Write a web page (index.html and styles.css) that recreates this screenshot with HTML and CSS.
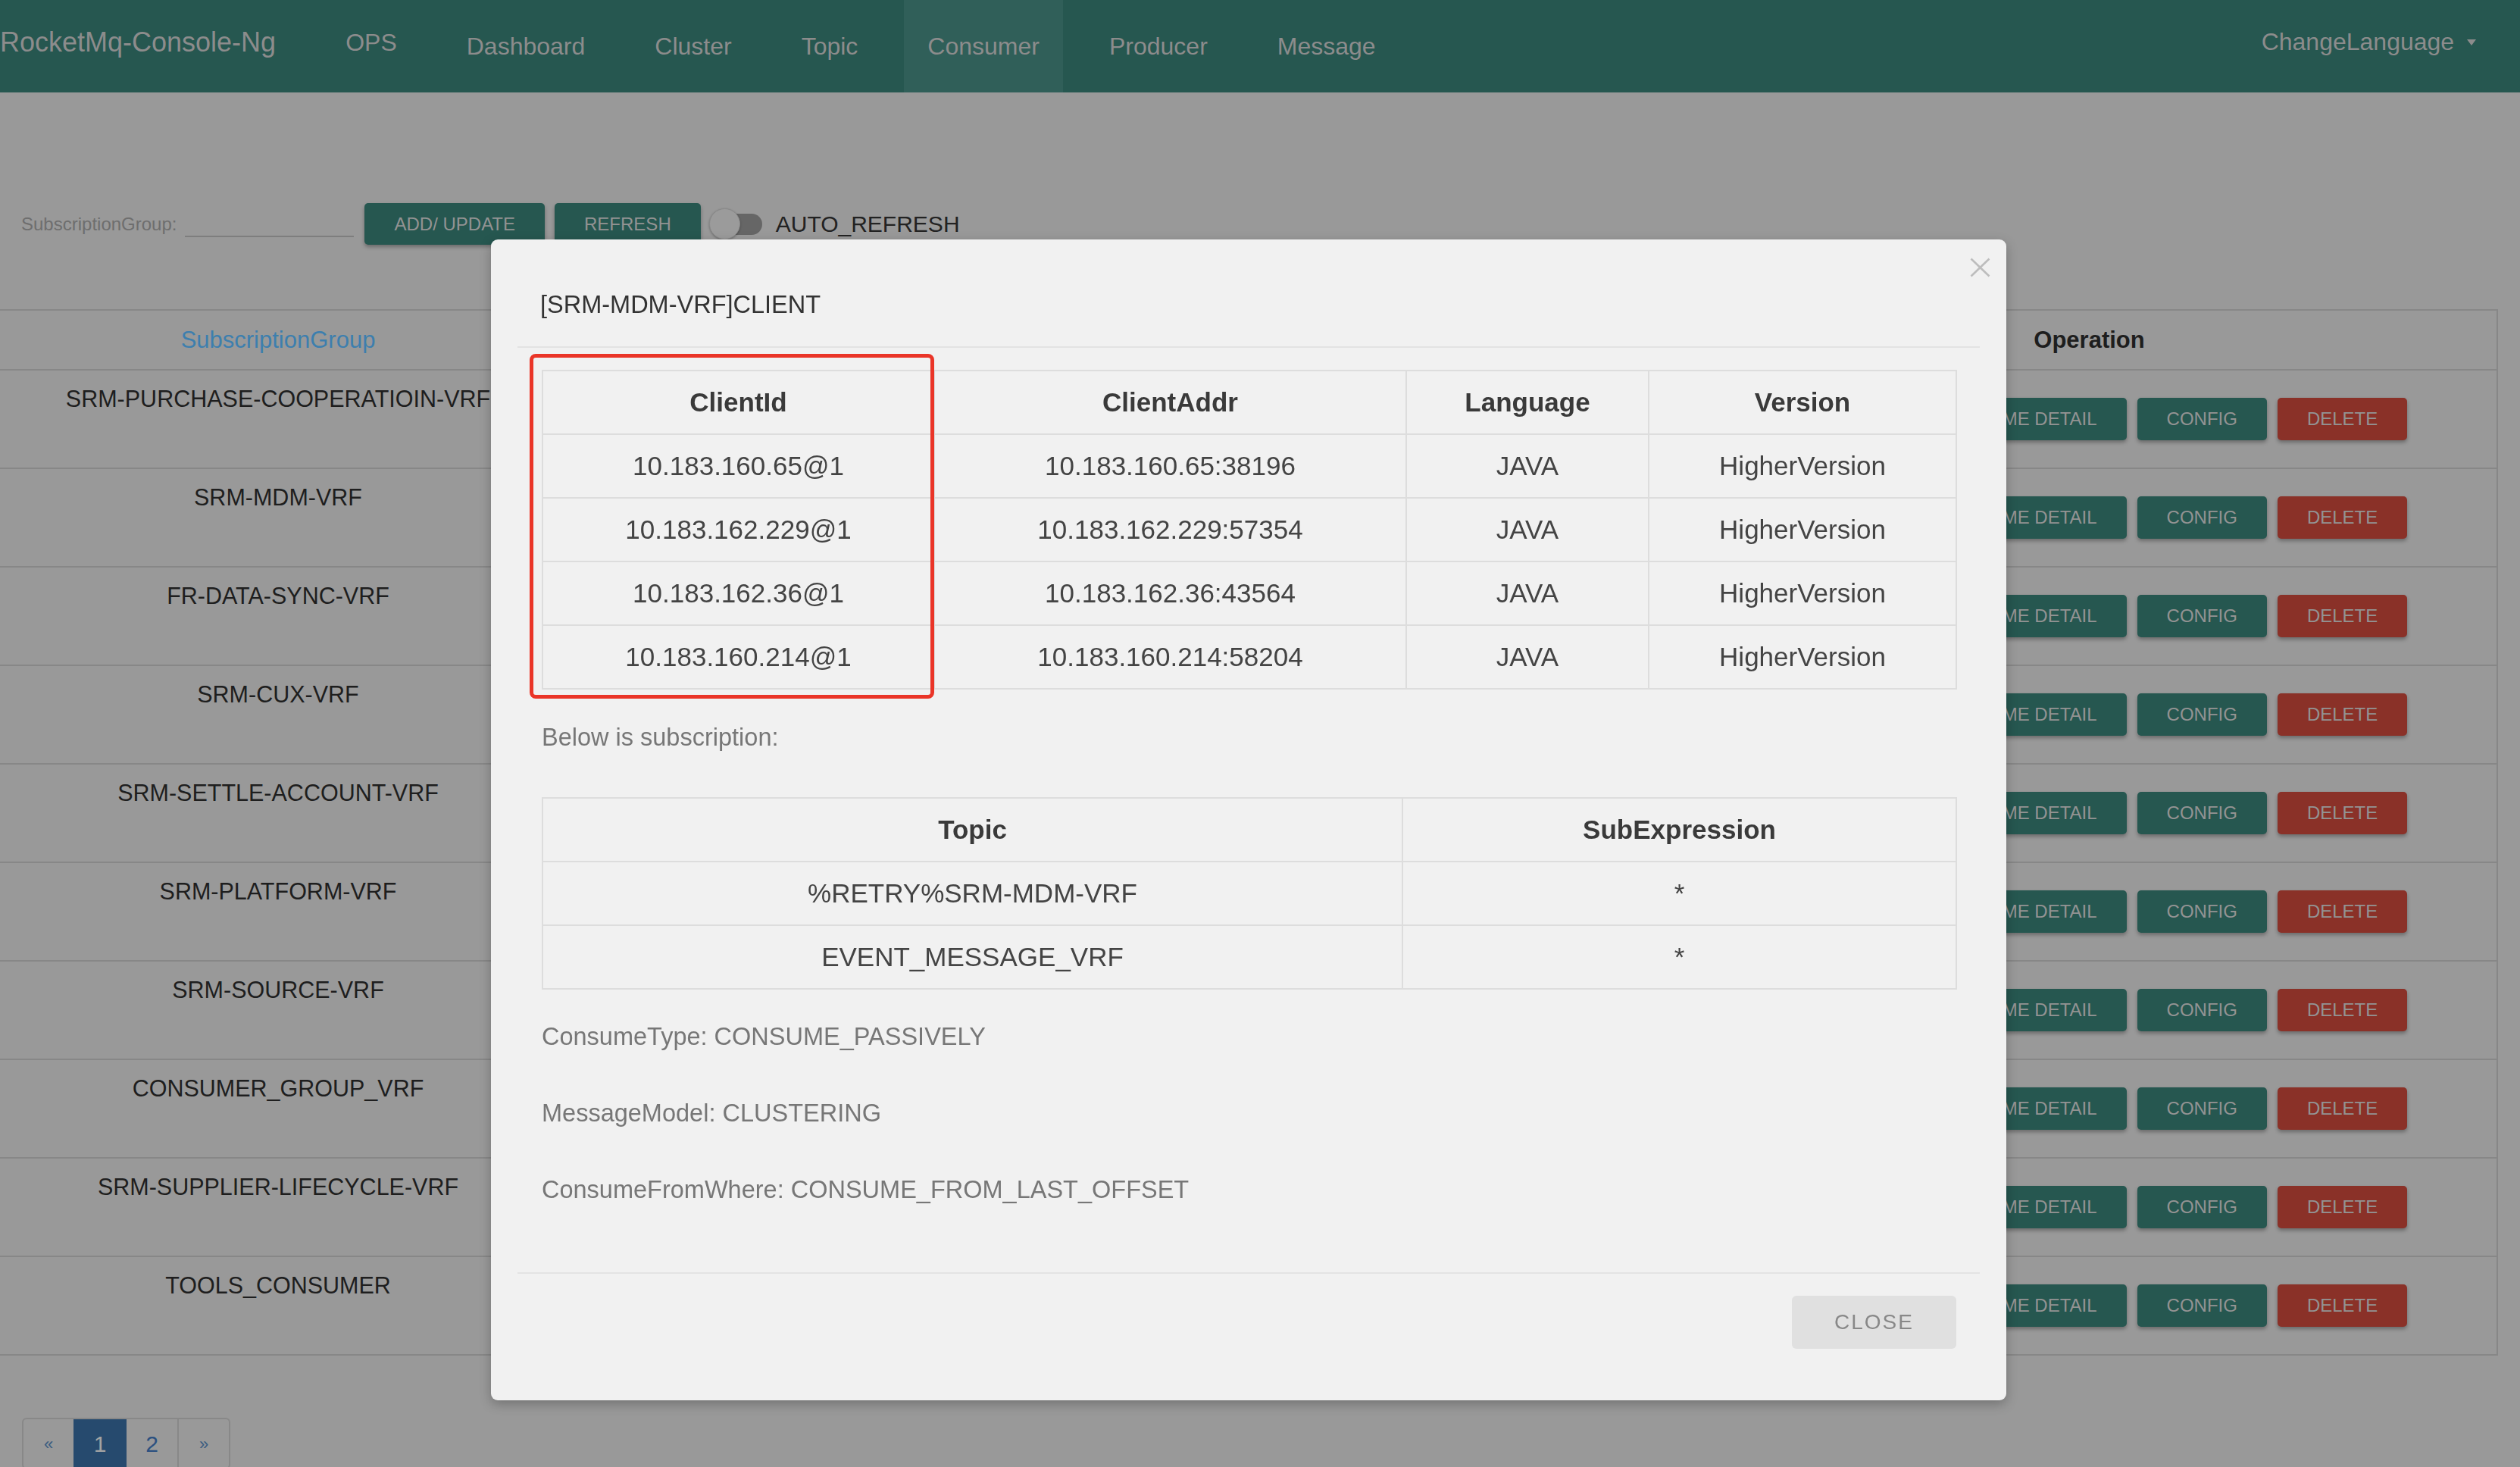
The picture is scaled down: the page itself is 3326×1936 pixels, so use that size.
FILE: index.html
```html
<!DOCTYPE html>
<html>
<head>
<meta charset="utf-8">
<title>RocketMq-Console-Ng</title>
<link rel="stylesheet" href="styles.css">
</head>
<body>
<nav class="navbar">
  <a class="brand">RocketMq-Console-Ng</a>
  <ul class="nav">
    <li class="ops">OPS</li>
    <li>Dashboard</li>
    <li>Cluster</li>
    <li>Topic</li>
    <li class="active">Consumer</li>
    <li>Producer</li>
    <li>Message</li>
  </ul>
  <div class="lang">ChangeLanguage <span class="caret"></span></div>
</nav>

<main class="content">
  <div class="toolbar">
    <label class="tb-label">SubscriptionGroup:</label>
    <span class="tb-input"></span>
    <button class="btn btn-green tb-add">ADD/ UPDATE</button>
    <button class="btn btn-green tb-refresh">REFRESH</button>
    <span class="switch"><span class="track"></span><span class="knob"></span></span>
    <span class="auto">AUTO_REFRESH</span>
  </div>

  <table class="groups">
    <colgroup>
      <col class="c-name"><col class="c-mid"><col class="c-op">
    </colgroup>
    <thead>
      <tr><th class="th-link">SubscriptionGroup</th><th></th><th class="th-op">Operation</th></tr>
    </thead>
    <tbody>
      <tr><td class="name">SRM-PURCHASE-COOPERATIOIN-VRF</td><td></td><td class="ops-cell"><div class="btns"><button class="btn btn-green">CONSUME DETAIL</button><button class="btn btn-green">CONFIG</button><button class="btn btn-red">DELETE</button></div></td></tr>
      <tr><td class="name">SRM-MDM-VRF</td><td></td><td class="ops-cell"><div class="btns"><button class="btn btn-green">CONSUME DETAIL</button><button class="btn btn-green">CONFIG</button><button class="btn btn-red">DELETE</button></div></td></tr>
      <tr><td class="name">FR-DATA-SYNC-VRF</td><td></td><td class="ops-cell"><div class="btns"><button class="btn btn-green">CONSUME DETAIL</button><button class="btn btn-green">CONFIG</button><button class="btn btn-red">DELETE</button></div></td></tr>
      <tr><td class="name">SRM-CUX-VRF</td><td></td><td class="ops-cell"><div class="btns"><button class="btn btn-green">CONSUME DETAIL</button><button class="btn btn-green">CONFIG</button><button class="btn btn-red">DELETE</button></div></td></tr>
      <tr><td class="name">SRM-SETTLE-ACCOUNT-VRF</td><td></td><td class="ops-cell"><div class="btns"><button class="btn btn-green">CONSUME DETAIL</button><button class="btn btn-green">CONFIG</button><button class="btn btn-red">DELETE</button></div></td></tr>
      <tr><td class="name">SRM-PLATFORM-VRF</td><td></td><td class="ops-cell"><div class="btns"><button class="btn btn-green">CONSUME DETAIL</button><button class="btn btn-green">CONFIG</button><button class="btn btn-red">DELETE</button></div></td></tr>
      <tr><td class="name">SRM-SOURCE-VRF</td><td></td><td class="ops-cell"><div class="btns"><button class="btn btn-green">CONSUME DETAIL</button><button class="btn btn-green">CONFIG</button><button class="btn btn-red">DELETE</button></div></td></tr>
      <tr><td class="name">CONSUMER_GROUP_VRF</td><td></td><td class="ops-cell"><div class="btns"><button class="btn btn-green">CONSUME DETAIL</button><button class="btn btn-green">CONFIG</button><button class="btn btn-red">DELETE</button></div></td></tr>
      <tr><td class="name">SRM-SUPPLIER-LIFECYCLE-VRF</td><td></td><td class="ops-cell"><div class="btns"><button class="btn btn-green">CONSUME DETAIL</button><button class="btn btn-green">CONFIG</button><button class="btn btn-red">DELETE</button></div></td></tr>
      <tr><td class="name">TOOLS_CONSUMER</td><td></td><td class="ops-cell"><div class="btns"><button class="btn btn-green">CONSUME DETAIL</button><button class="btn btn-green">CONFIG</button><button class="btn btn-red">DELETE</button></div></td></tr>
    </tbody>
  </table>

  <ul class="pagination">
    <li class="pg-arrow">«</li>
    <li class="pg-active">1</li>
    <li class="pg-num">2</li>
    <li class="pg-arrow pg-last">»</li>
  </ul>
</main>

<div class="modal">
  <div class="modal-header">
    <h4 class="modal-title">[SRM-MDM-VRF]CLIENT</h4>
    <span class="close" aria-label="close"><svg width="27" height="26" viewBox="0 0 27 26"><path d="M1.5 1.5 L25.5 24.5 M25.5 1.5 L1.5 24.5" stroke="#bdbdbd" stroke-width="2.6" fill="none"/></svg></span>
  </div>
  <div class="modal-body">
    <table class="mtable clients">
      <colgroup><col class="w1"><col class="w2"><col class="w3"><col class="w4"></colgroup>
      <thead><tr><th>ClientId</th><th>ClientAddr</th><th>Language</th><th>Version</th></tr></thead>
      <tbody>
        <tr><td>10.183.160.65@1</td><td>10.183.160.65:38196</td><td>JAVA</td><td>HigherVersion</td></tr>
        <tr><td>10.183.162.229@1</td><td>10.183.162.229:57354</td><td>JAVA</td><td>HigherVersion</td></tr>
        <tr><td>10.183.162.36@1</td><td>10.183.162.36:43564</td><td>JAVA</td><td>HigherVersion</td></tr>
        <tr><td>10.183.160.214@1</td><td>10.183.160.214:58204</td><td>JAVA</td><td>HigherVersion</td></tr>
      </tbody>
    </table>
    <p class="below">Below is subscription:</p>
    <table class="mtable subs">
      <colgroup><col class="s1"><col class="s2"></colgroup>
      <thead><tr><th>Topic</th><th>SubExpression</th></tr></thead>
      <tbody>
        <tr><td>%RETRY%SRM-MDM-VRF</td><td>*</td></tr>
        <tr><td>EVENT_MESSAGE_VRF</td><td>*</td></tr>
      </tbody>
    </table>
    <p class="info first">ConsumeType: CONSUME_PASSIVELY</p>
    <p class="info">MessageModel: CLUSTERING</p>
    <p class="info">ConsumeFromWhere: CONSUME_FROM_LAST_OFFSET</p>
  </div>
  <div class="modal-footer">
    <button class="btn-close">CLOSE</button>
  </div>
  <div class="highlight"></div>
</div>
</body>
</html>
```

FILE: styles.css
```css
html, body {
  margin: 0;
  padding: 0;
  overflow: hidden;
  height: 100%;
}
body {
  background: #999999;
  font-family: "Helvetica Neue", "Liberation Sans", Arial, sans-serif;
  color: #1f1f1f;
}

/* ---------- navbar ---------- */
.navbar {
  height: 122px;
  background: #265750;
  display: flex;
  align-items: stretch;
  color: #8c8c8c;
}
.brand {
  font-size: 36px;
  line-height: 111px;
  padding: 0 31px 0 0;
  margin-right: 30px;
  white-space: nowrap;
}
.nav {
  list-style: none;
  margin: 0;
  padding: 0;
  display: flex;
  gap: 30px;
}
.nav li {
  font-size: 32px;
  line-height: 122px;
  padding: 0 31px;
  white-space: nowrap;
}
.nav li.ops { line-height: 112px; }
.nav li.active { background: #305f59; }
.lang {
  margin-left: auto;
  font-size: 32px;
  line-height: 110px;
  padding-right: 58px;
  white-space: nowrap;
}
.caret {
  display: inline-block;
  width: 0;
  height: 0;
  border-left: 6px solid transparent;
  border-right: 6px solid transparent;
  border-top: 8px solid #8c8c8c;
  vertical-align: middle;
  margin-left: 8px;
  position: relative;
  top: -2px;
}

/* ---------- toolbar ---------- */
.content { padding: 0; }
.toolbar {
  margin-top: 146px;
  padding-left: 28px;
  height: 55px;
  display: flex;
  align-items: center;
}
.tb-label {
  font-size: 24px;
  color: #6e6e6e;
}
.tb-input {
  display: block;
  width: 223px;
  height: 32px;
  border-bottom: 2px solid #7e7e7e;
  margin-left: 11px;
}
.btn {
  font-family: "Helvetica Neue", "Liberation Sans", Arial, sans-serif;
  font-size: 24px;
  color: #939393;
  border: none;
  border-radius: 5px;
  padding: 0 39px;
  box-shadow: 0 3px 5px rgba(0, 0, 0, 0.3);
  white-space: nowrap;
}
.btn-green { background: #265750; }
.btn-red { background: #8a3128; }
.toolbar .btn { height: 55px; }
.tb-add { margin-left: 14px; }
.tb-refresh { margin-left: 13px; }
.switch {
  position: relative;
  width: 70px;
  height: 41px;
  margin-left: 11px;
}
.track {
  position: absolute;
  left: 10px;
  top: 7px;
  width: 60px;
  height: 28px;
  border-radius: 14px;
  background: #666666;
}
.knob {
  position: absolute;
  left: 0;
  top: 0;
  width: 39px;
  height: 39px;
  border-radius: 50%;
  background: #9b9b9b;
  border: 1px solid #8a8a8a;
  box-shadow: 0 1px 3px rgba(0, 0, 0, 0.3);
}
.auto {
  font-size: 30px;
  color: #222;
  margin-left: 18px;
}

/* ---------- main table ---------- */
.groups {
  margin-top: 85px;
  width: 3296px;
  border-collapse: collapse;
  table-layout: fixed;
}
.c-name { width: 734px; }
.c-mid { width: 1486px; }
.c-op { width: 1076px; }
.groups th {
  height: 77px;
  padding: 0;
  font-size: 31px;
  font-weight: normal;
  border-top: 2px solid #878787;
  border-bottom: 2px solid #878787;
  vertical-align: middle;
  text-align: center;
}
.groups th.th-link { color: #3d7fae; }
.groups th.th-op { font-weight: bold; color: #1e1e1e; border-right: 2px solid #878787; }
.groups td {
  height: 113px;
  padding: 0;
  border-bottom: 2px solid #878787;
  font-size: 30.5px;
  color: #1e1e1e;
}
.groups td.name {
  vertical-align: top;
  text-align: center;
  padding-top: 15px;
  line-height: 44px;
  white-space: nowrap;
}
.groups td.ops-cell {
  border-right: 2px solid #878787;
  vertical-align: middle;
  padding-left: 297px;
}
.btns {
  display: flex;
  gap: 14px;
}
.btns .btn { height: 56px; }

/* ---------- pagination ---------- */
.pagination {
  list-style: none;
  margin: 82px 0 0 29px;
  padding: 0;
  display: flex;
  width: max-content;
  border: 2px solid #888;
  border-radius: 6px;
  overflow: hidden;
}
.pagination li {
  height: 64px;
  line-height: 66px;
  text-align: center;
  font-size: 30px;
}
.pg-arrow { width: 66px; color: #3a5c80; font-size: 22px !important; }
.pg-last { border-left: 2px solid #888; }
.pg-active { width: 70px; background: #264a6e; color: #a3a3a3; }
.pg-num { width: 67px; color: #2b5080; }

/* ---------- modal ---------- */
.modal {
  position: fixed;
  left: 648px;
  top: 316px;
  width: 2000px;
  box-sizing: border-box;
  padding: 0 35px;
  background: #f1f1f1;
  border-radius: 9px;
  box-shadow: 0 5px 15px rgba(0, 0, 0, 0.25);
  color: #333;
}
.modal-header {
  position: relative;
  padding: 64px 30px 32px;
  border-bottom: 2px solid #e3e3e3;
}
.modal-title {
  margin: 0;
  font-size: 32.5px;
  line-height: 45px;
  font-weight: normal;
  color: #333;
}
.close {
  position: absolute;
  top: 24px;
  right: -14px;
  line-height: 0;
}
.modal-body {
  padding: 29px 32px 86px;
}
.mtable {
  width: 100%;
  border-collapse: collapse;
  table-layout: fixed;
}
.mtable th, .mtable td {
  height: 82px;
  padding: 0;
  border: 2px solid #dddddd;
  text-align: center;
  vertical-align: middle;
  font-size: 35px;
}
.mtable th { font-weight: bold; color: #3a3a3a; }
.mtable td { color: #444; }
.w1 { width: 517px; }
.w2 { width: 623px; }
.w3 { width: 320px; }
.w4 { width: 406px; }
.s1 { width: 1135px; }
.s2 { width: 731px; }
.below {
  margin: 41px 0 56px;
  font-size: 32.5px;
  line-height: 45px;
  color: #777;
}
.info {
  margin: 0 0 56px;
  font-size: 32.5px;
  line-height: 45px;
  color: #777;
}
.info.first { margin-top: 40px; }
.info:last-child { margin-bottom: 0; }
.modal-footer {
  border-top: 2px solid #e3e3e3;
  padding: 29px 31px 68px;
  display: flex;
  justify-content: flex-end;
}
.btn-close {
  width: 217px;
  height: 70px;
  border: none;
  border-radius: 6px;
  background: #e0e0e0;
  color: #888;
  font-family: "Helvetica Neue", "Liberation Sans", Arial, sans-serif;
  font-size: 28px;
  letter-spacing: 2px;
}
.highlight {
  position: absolute;
  left: 51px;
  top: 151px;
  width: 534px;
  height: 455px;
  box-sizing: border-box;
  border: 5px solid #ea3528;
  border-radius: 8px;
  pointer-events: none;
}
```
